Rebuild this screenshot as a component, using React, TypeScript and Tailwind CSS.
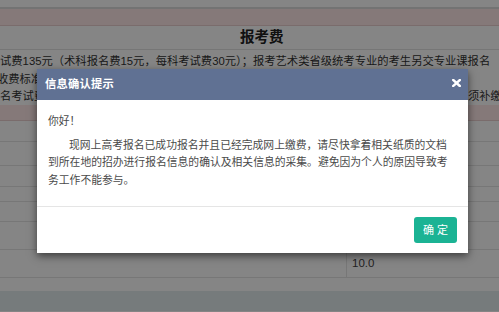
export default function App() {
  const font = { fontFamily: '"Liberation Sans", "Noto Sans CJK SC", sans-serif' };
  return (
    <div className="relative w-[499px] h-[312px] overflow-hidden bg-white text-[#333]" style={font}>
      {/* page under the overlay */}
      <div className="flex flex-col">
        <div className="h-[9px] border-b-[2px] border-[#dcdcdc]" />
        <div className="h-[17px] bg-[#ffe9e9] border-b border-[#ead0d0]" />
        <div className="h-[24px] pl-[240px] flex items-center text-[14.5px] font-bold text-[#222] border-b border-[#e2e2e2]">
          报考费
        </div>
        <div className="h-[55px] flex flex-col text-[11.3px] leading-[17.5px] pt-[3px] whitespace-nowrap">
          <div>试费135元（术科报名费15元，每科考试费30元）；报考艺术类省级统考专业的考生另交专业课报名</div>
          <div className="-ml-[3px]">收费标准按规定执行。</div>
          <div className="flex w-[520px] justify-between">
            <span>名考试费已在网上缴纳的考生无须再缴，未缴费的考生</span>
            <span className="w-[52px]">须补缴费</span>
          </div>
        </div>
        <div className="h-[16px] bg-[#ffe9e9] border-b border-[#ead0d0]" />
        <div className="h-[21px] border-b border-[#e4e4e4]" />
        <div className="h-[24px] border-b border-[#e4e4e4]" />
        <div className="h-[21px] border-b border-[#e4e4e4]" />
        <div className="h-[15px] border-b border-[#e4e4e4]" />
        <div className="h-[20px] border-b border-[#e4e4e4]" />
        <div className="h-[28px] border-b border-[#e4e4e4] flex">
          <div className="w-[347px] border-r border-[#e4e4e4]" />
        </div>
        <div className="h-[28px] border-b border-[#e4e4e4] flex">
          <div className="w-[347px] border-r border-[#e4e4e4]" />
          <div className="pl-[5px] flex items-center text-[11.5px] text-[#444]">10.0</div>
        </div>
        <div className="h-[13px]" />
        <div className="h-[20px] bg-[#e3ebee]" />
      </div>

      {/* overlay */}
      <div className="absolute inset-0 bg-black/[0.48]" />

      {/* dialog */}
      <div className="absolute left-[37px] top-[69px] w-[431px] bg-white shadow-[0_3px_8px_rgba(0,0,0,0.55)]">
        <div className="h-[31px] bg-[#607193] flex items-center justify-between pl-[8px] pr-[7px]">
          <span className="text-[11.3px] font-bold text-white tracking-[0.2px]">信息确认提示</span>
          <svg width="9" height="8" viewBox="0 0 9 8" className="-mt-[4px]">
            <path d="M1.2 1 L7.8 7 M7.8 1 L1.2 7" stroke="white" strokeWidth="2.4" strokeLinecap="square" />
          </svg>
        </div>
        <div className="px-[11px] pt-[13px] pb-[17px] text-[10.8px] leading-[17.5px] text-[#4a4a4a] whitespace-nowrap">
          <div>你好！</div>
          <div className="mt-[6px] indent-[21px]">
            现网上高考报名已成功报名并且已经完成网上缴费，请尽快拿着相关纸质的文档
            <br />
            到所在地的招办进行报名信息的确认及相关信息的采集。避免因为个人的原因导致考
            <br />
            务工作不能参与。
          </div>
        </div>
        <div className="border-t border-[#e5e5e5] flex justify-end pt-[10px] pb-[10px] pr-[11px]">
          <button
            type="button"
            className="w-[43px] h-[26px] rounded-[3px] bg-[#1bb394] text-white text-[11px] tracking-[3px] pl-[3px]"
          >
            确定
          </button>
        </div>
      </div>
    </div>
  );
}
